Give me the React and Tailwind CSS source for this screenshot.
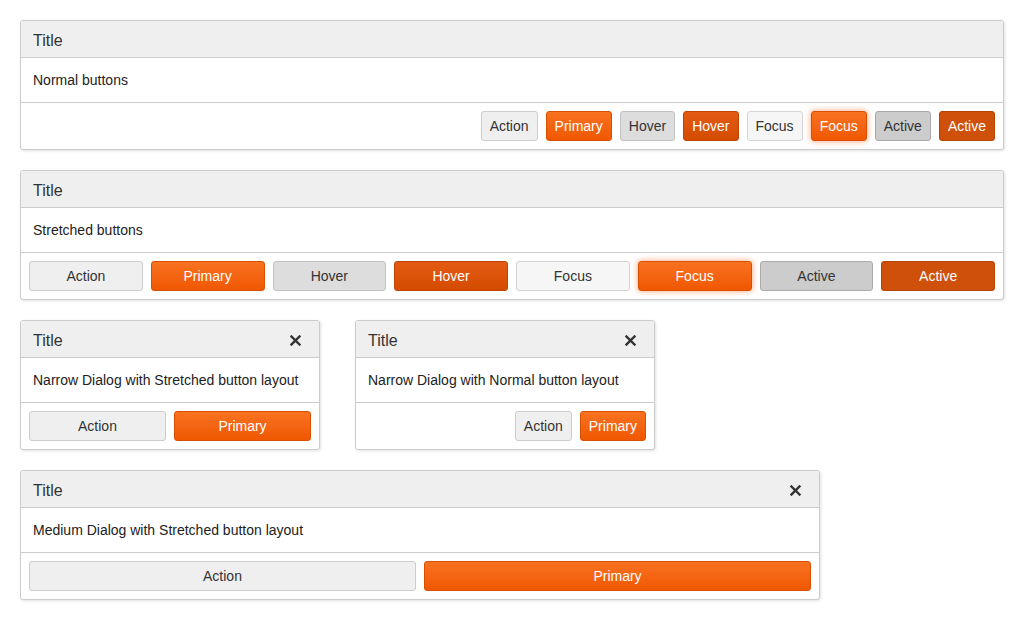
const font = { fontFamily: '"Liberation Sans", Arial, sans-serif' }

const base = 'h-[30px] px-2 rounded-[3px] border text-sm leading-none whitespace-nowrap'

const variants = {
  action: 'bg-[#efefef] border-[#cccccc] text-[#333]',
  primary: 'bg-gradient-to-b from-[#f8721f] to-[#f05700] border-[#d84f00] text-white',
  actionHover: 'bg-[#dddddd] border-[#c2c2c2] text-[#333]',
  primaryHover: 'bg-gradient-to-b from-[#e35b12] to-[#d44b00] border-[#c04400] text-white',
  actionFocus: 'bg-[#f6f6f6] border-[#d4d4d4] text-[#333]',
  primaryFocus: 'bg-gradient-to-b from-[#f8721f] to-[#f05700] border-[#d84f00] text-white shadow-[0_0_6px_rgba(245,100,20,0.6)]',
  actionActive: 'bg-[#cccccc] border-[#aaaaaa] text-[#333]',
  primaryActive: 'bg-[#cf500b] border-[#b44300] text-white',
}

function Button({ kind, stretch, children }) {
  return <button className={`${base} ${variants[kind]} ${stretch ? 'flex-1' : ''}`}>{children}</button>
}

function Close() {
  return (
    <svg width="11" height="11" viewBox="0 0 11 11">
      <path d="M1.5 1.5 L9.5 9.5 M9.5 1.5 L1.5 9.5" stroke="#333" strokeWidth="2.4" strokeLinecap="square" />
    </svg>
  )
}

function Dialog({ width, text, close, stretch, buttons }) {
  return (
    <div className={`${width} bg-white border border-[#cccccc] rounded-[3px] shadow-[1px_1px_3px_rgba(0,0,0,0.12)] overflow-hidden`}>
      <div className="h-[37px] flex items-center justify-between pl-3 pr-[18px] pt-[3px] bg-[#efefef] border-b border-[#cccccc]">
        <span className="text-base text-[#333]">Title</span>
        {close && <Close />}
      </div>
      <div className="h-[45px] flex items-center px-3 border-b border-[#cccccc] text-sm text-[#222]">{text}</div>
      <div className={`flex gap-2 p-2 ${stretch ? '' : 'justify-end'}`}>
        {buttons.map(([kind, label], i) => (
          <Button key={i} kind={kind} stretch={stretch}>{label}</Button>
        ))}
      </div>
    </div>
  )
}

const allButtons = [
  ['action', 'Action'],
  ['primary', 'Primary'],
  ['actionHover', 'Hover'],
  ['primaryHover', 'Hover'],
  ['actionFocus', 'Focus'],
  ['primaryFocus', 'Focus'],
  ['actionActive', 'Active'],
  ['primaryActive', 'Active'],
]

const pair = [
  ['action', 'Action'],
  ['primary', 'Primary'],
]

export default function App() {
  return (
    <div style={font} className="w-[1024px] min-h-[620px] bg-white p-5 flex flex-col gap-5">
      <Dialog width="w-full" text="Normal buttons" buttons={allButtons} />
      <Dialog width="w-full" text="Stretched buttons" stretch buttons={allButtons} />
      <div className="flex gap-[35px]">
        <Dialog width="w-[300px]" text="Narrow Dialog with Stretched button layout" close stretch buttons={pair} />
        <Dialog width="w-[300px]" text="Narrow Dialog with Normal button layout" close buttons={pair} />
      </div>
      <Dialog width="w-[800px]" text="Medium Dialog with Stretched button layout" close stretch buttons={pair} />
    </div>
  )
}
